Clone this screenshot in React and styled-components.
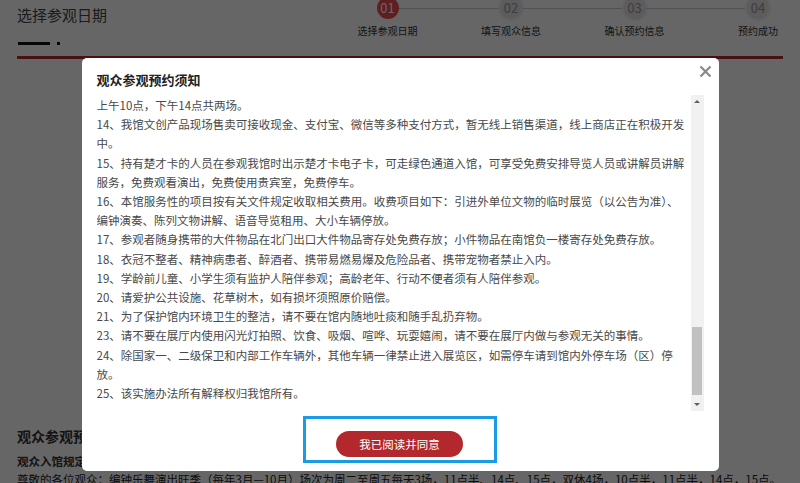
import React, { useEffect, useRef, useState } from "react";
import styled, { createGlobalStyle } from "styled-components";

const steps = [
  { no: "01", label: "选择参观日期" },
  { no: "02", label: "填写观众信息" },
  { no: "03", label: "确认预约信息" },
  { no: "04", label: "预约成功" },
];

const notices = [
  "为进一步做好观众服务工作，保障观众参观安全，维护良好的参观秩序，根据国家有关法律法规及上级主管部门的相关规定，结合我馆实际情况，特制定本实施办法。请广大观众在预约和参观前仔细阅读以下须知，并自觉遵守。",
  "一、开放时间",
  "本馆开放时间为每周二至周日9:00—17:00，16:00停止入馆，15:30停止发放当日门票。每周一（国家法定节假日除外）为闭馆日，闭馆期间进行设施维护和展陈调整。如遇特殊情况需临时闭馆或调整开放时间，将提前在官方网站、微信公众号等平台发布公告，敬请留意。",
  "二、预约方式",
  "本馆实行实名制免费预约参观，观众可通过本馆官方网站、微信公众号、小程序等渠道提前7天进行预约，每日预约名额有限，约满即止。暂不提供电话预约服务，请观众合理安排参观时间。",
  "每位观众凭本人有效身份证件每天限预约一次，每次预约最多可同时为4名同行观众登记，同行观众须如实填写姓名及有效证件号码。未成年人可由监护人代为预约。",
  "预约成功后，系统将以短信形式发送预约信息，观众须在预约日期的对应时段内凭本人有效证件原件入馆，逾期未到视为自动放弃，名额不予保留。",
  "如因故不能按时参观，请于参观日前一天17:00前通过预约渠道取消预约。一个自然月内累计三次预约后未到馆且未取消者，系统将自动暂停其预约资格30天。",
  "三、团队参观",
  "团队参观（10人及以上）须至少提前3天通过团队预约通道进行申请，由领队统一提交团队成员信息，参观当日由领队统一办理入馆手续，团队成员须集体入馆。",
  "学校组织的学生团体参观，须由带队教师提前联系本馆社会教育部，每10名学生须至少配备1名带队教师，带队教师负责学生在馆期间的安全与秩序。",
  "旅行社组织的团队须由持证导游带领，导游须佩戴导游证，并遵守本馆关于讲解区域、讲解音量等方面的管理规定，不得影响其他观众正常参观。",
  "四、优待政策",
  "残疾人、现役军人、消防救援人员、离休干部及70周岁以上老年人，凭本人有效证件可走绿色通道入馆，无需预约。",
  "孕妇、携带婴幼儿的观众可在服务台免费借用婴儿车，借用时须登记有效证件，参观结束后请及时归还至服务台。",
  "行动不便的观众可在服务台免费借用轮椅，馆内各展厅均设有无障碍通道及无障碍卫生间，如需帮助请与现场工作人员联系。",
  "五、服务设施",
  "本馆在一楼大厅设有服务台，提供咨询、寄存、失物招领、轮椅及婴儿车借用等服务；观众在参观过程中如遇任何问题，均可向服务台或展厅工作人员求助。",
  "馆内设有医务室，配备常用药品和急救设备，观众如有身体不适，请及时联系工作人员；馆内各楼层均设有饮水点和休息区，方便观众休憩。",
  "本馆设有观众餐厅和文创商店，营业时间与开馆时间一致，请观众在指定区域内用餐，勿将食品和饮料带入展厅。",
  "六、参观须知",
  "1、观众入馆须配合工作人员进行安全检查和证件查验，服从工作人员的引导和管理。严禁携带枪支弹药、管制刀具、易燃易爆、有毒有害、放射性、腐蚀性等危险物品入馆。",
  "2、请观众文明参观，爱护文物展品和展览设施，不得触摸、倚靠、攀爬展柜及展品，不得在展品、展板、墙面上刻画涂写。",
  "3、展厅内请保持安静，勿大声喧哗、追逐打闹，请将手机调至静音或振动状态，接听电话请轻声细语，以免影响其他观众参观。",
  "4、展厅内除特别标注禁止拍照的展品外，观众可进行非商业性拍照，但不得使用闪光灯、三脚架、自拍杆等辅助设备。未经许可，不得进行商业性摄影、摄像。",
  "5、请观众按照参观路线有序参观，遇人流高峰时请听从工作人员的疏导，不要拥挤，注意自身及他人安全。",
  "6、馆内严禁吸烟，严禁在馆内进行任何形式的商业宣传、推销、募捐及散发各类宣传品等活动。",
  "7、未经许可，任何单位和个人不得在馆内进行集会、演讲、表演、拍摄婚纱照及其他与参观无关的活动。",
  "8、请观众妥善保管好随身携带的贵重物品，如有遗失，本馆不承担责任；拾到他人物品请交至服务台。",
  "9、遇突发事件时，请保持冷静，听从工作人员指挥，按照应急疏散指示标志有序撤离，切勿惊慌拥挤。",
  "10、展厅内除特别标注外，观众不得使用无人机、激光笔等设备，不得对展品及其他观众造成干扰。",
  "11、馆内提供免费人工讲解服务，每天定时开展，具体场次以当日服务台公告为准；语音导览器可在服务台凭有效证件租用。",
  "12、编钟乐舞演出观众须提前在演出厅入口处排队，按先后顺序凭当日入馆凭证入场，每场限额观看，满员即止，演出开始后谢绝入场。",
  "13、编钟乐舞演出淡季（每年11月—次年2月）场次为周二至周五每天2场，双休日及节假日每天3场，具体安排详见当日公告。淡季工作日演出时间为\n上午10点，下午14点共两场。",
  "14、我馆文创产品现场售卖可接收现金、支付宝、微信等多种支付方式，暂无线上销售渠道，线上商店正在积极开发\n中。",
  "15、持有楚才卡的人员在参观我馆时出示楚才卡电子卡，可走绿色通道入馆，可享受免费安排导览人员或讲解员讲解\n服务，免费观看演出，免费使用贵宾室，免费停车。",
  "16、本馆服务性的项目按有关文件规定收取相关费用。收费项目如下：引进外单位文物的临时展览（以公告为准）、\n编钟演奏、陈列文物讲解、语音导览租用、大小车辆停放。",
  "17、参观者随身携带的大件物品在北门出口大件物品寄存处免费存放；小件物品在南馆负一楼寄存处免费存放。",
  "18、衣冠不整者、精神病患者、醉酒者、携带易燃易爆及危险品者、携带宠物者禁止入内。",
  "19、学龄前儿童、小学生须有监护人陪伴参观；高龄老年、行动不便者须有人陪伴参观。",
  "20、请爱护公共设施、花草树木，如有损坏须照原价赔偿。",
  "21、为了保护馆内环境卫生的整洁，请不要在馆内随地吐痰和随手乱扔弃物。",
  "23、请不要在展厅内使用闪光灯拍照、饮食、吸烟、喧哗、玩耍嬉闹，请不要在展厅内做与参观无关的事情。",
  "24、除国家一、二级保卫和内部工作车辆外，其他车辆一律禁止进入展览区，如需停车请到馆内外停车场（区）停\n放。",
  "25、该实施办法所有解释权归我馆所有。",
];

const TRACK = 290;

const App = () => {
  const scrollRef = useRef(null);
  const [thumb, setThumb] = useState({ top: 0, height: 40 });

  useEffect(() => {
    const el = scrollRef.current;
    if (!el) return;
    const update = () => {
      const height = Math.max(24, (TRACK * el.clientHeight) / el.scrollHeight);
      const range = el.scrollHeight - el.clientHeight;
      const top = range > 0 ? ((TRACK - 3 - height) * el.scrollTop) / range : 0;
      setThumb({ top, height });
    };
    el.scrollTop = el.scrollHeight;
    update();
    el.addEventListener("scroll", update);
    return () => el.removeEventListener("scroll", update);
  }, []);

  return (
    <>
      <GlobalStyle />
      <Page>
        <Header>
          <TitleBlock>
            <PageTitle>选择参观日期</PageTitle>
            <TitleMark>
              <MarkBar />
              <MarkDot />
            </TitleMark>
          </TitleBlock>
          <Steps>
            {steps.map((step, i) => (
              <React.Fragment key={step.no}>
                {i > 0 && <Connector />}
                <Step>
                  <StepCircle $active={i === 0}>{step.no}</StepCircle>
                  <StepLabel>{step.label}</StepLabel>
                </Step>
              </React.Fragment>
            ))}
          </Steps>
        </Header>
        <RedRule />
        <DateArea />
        <SectionHeading>观众参观预约须知</SectionHeading>
        <RuleTitle>观众入馆规定：</RuleTitle>
        <NoticeLine>
          尊敬的各位观众：编钟乐舞演出旺季（每年3月—10月）场次为周二至周五每天3场，11点半、14点、15点，双休4场，10点半，11点半，14点，15点。
        </NoticeLine>
      </Page>

      <Overlay>
        <Modal>
          <ModalHeader>
            <ModalTitle>观众参观预约须知</ModalTitle>
            <CloseButton aria-label="关闭">
              <svg width="13" height="13" viewBox="0 0 13 13">
                <path
                  d="M1.5 1.5 L11.5 11.5 M11.5 1.5 L1.5 11.5"
                  stroke="#8a8a8a"
                  strokeWidth="2.3"
                />
              </svg>
            </CloseButton>
          </ModalHeader>
          <ScrollFrame>
            <ScrollBody ref={scrollRef}>
              {notices.map((text, i) => (
                <Paragraph key={i}>{text}</Paragraph>
              ))}
            </ScrollBody>
            <ScrollBar>
              <ArrowButton>
                <Arrow />
              </ArrowButton>
              <Track>
                <Thumb style={{ marginTop: thumb.top, height: thumb.height }} />
              </Track>
              <ArrowButton>
                <Arrow $down />
              </ArrowButton>
            </ScrollBar>
          </ScrollFrame>
          <Footer>
            <HighlightBox>
              <AgreeButton>我已阅读并同意</AgreeButton>
            </HighlightBox>
          </Footer>
        </Modal>
      </Overlay>
    </>
  );
};

const GlobalStyle = createGlobalStyle`
  body {
    margin: 0;
    background: #fff;
    font-family: "Noto Sans CJK SC", "Noto Sans", sans-serif;
    color: #333;
  }
`;

const Page = styled.div`
  padding: 0 17px;
`;

const Header = styled.div`
  display: flex;
  justify-content: space-between;
  height: 56px;
`;

const TitleBlock = styled.div`
  padding-top: 5px;
`;

const PageTitle = styled.div`
  font-size: 15px;
  line-height: 20px;
  color: #444;
`;

const TitleMark = styled.div`
  display: flex;
  align-items: center;
  gap: 7px;
  margin-top: 17px;
  padding-left: 1px;
`;

const MarkBar = styled.span`
  width: 32px;
  height: 3px;
  background: #111;
`;

const MarkDot = styled.span`
  width: 3px;
  height: 3px;
  background: #111;
`;

const Steps = styled.div`
  display: flex;
  align-items: flex-start;
  margin-top: -3px;
  margin-right: 14px;
`;

const Step = styled.div`
  width: 22px;
  display: flex;
  flex-direction: column;
  align-items: center;
`;

const StepCircle = styled.div`
  width: 22px;
  height: 22px;
  border-radius: 50%;
  background: ${(props) => (props.$active ? "#f04c50" : "#e6e6e6")};
  color: ${(props) => (props.$active ? "#fff" : "#9a9a9a")};
  box-shadow: ${(props) => (props.$active ? "none" : "0 0 0 2px #f3f3f3")};
  font-size: 13px;
  line-height: 22px;
  text-align: center;
`;

const StepLabel = styled.div`
  margin-top: 6px;
  font-size: 10px;
  line-height: 12px;
  white-space: nowrap;
  color: #333;
`;

const Connector = styled.div`
  width: 101.5px;
  height: 1px;
  margin-top: 10.5px;
  background: #ccc;
`;

const RedRule = styled.div`
  height: 3px;
  background: #b82c31;
`;

const DateArea = styled.div`
  height: 367px;
`;

const SectionHeading = styled.div`
  font-size: 14px;
  line-height: 20px;
  font-weight: bold;
  color: #333;
`;

const RuleTitle = styled.div`
  margin-top: 6px;
  font-size: 11.5px;
  line-height: 18px;
  font-weight: bold;
  color: #333;
`;

const NoticeLine = styled.div`
  font-size: 11.5px;
  line-height: 18px;
  color: #222;
  white-space: nowrap;
`;

const Overlay = styled.div`
  position: fixed;
  inset: 0;
  background: rgba(0, 0, 0, 0.6);
  display: flex;
  justify-content: center;
  align-items: flex-start;
  padding-top: 58px;
`;

const Modal = styled.div`
  width: 637px;
  height: 413px;
  box-sizing: border-box;
  padding: 13px 15px 0;
  background: #fff;
  border-radius: 5px;
  display: flex;
  flex-direction: column;
`;

const ModalHeader = styled.div`
  display: flex;
  justify-content: space-between;
  align-items: flex-start;
`;

const ModalTitle = styled.div`
  font-size: 13px;
  line-height: 18px;
  font-weight: bold;
  color: #222;
`;

const CloseButton = styled.button`
  display: flex;
  padding: 0;
  border: none;
  background: none;
  margin: -6px -8px 0 0;
  cursor: pointer;
`;

const ScrollFrame = styled.div`
  display: flex;
  height: 316px;
  margin-top: 6px;
`;

const ScrollBody = styled.div`
  flex: 1;
  min-width: 0;
  box-sizing: border-box;
  padding-bottom: 8px;
  overflow-y: auto;
  overflow-x: hidden;
  scrollbar-width: none;
`;

const ScrollBar = styled.div`
  width: 13px;
  display: flex;
  flex-direction: column;
  background: #f1f1f1;
`;

const ArrowButton = styled.div`
  height: 13px;
  display: flex;
  align-items: center;
  justify-content: center;
`;

const Arrow = styled.span`
  width: 0;
  height: 0;
  border-left: 3px solid transparent;
  border-right: 3px solid transparent;
  border-bottom: ${(props) => (props.$down ? "none" : "3px solid #606060")};
  border-top: ${(props) => (props.$down ? "3px solid #606060" : "none")};
`;

const Track = styled.div`
  flex: 1;
  padding: 0 1.5px;
`;

const Thumb = styled.div`
  background: #c1c1c1;
`;

const Paragraph = styled.p`
  margin: 0;
  font-size: 11.5px;
  line-height: 19.2px;
  color: #484848;
  white-space: pre-line;
`;

const Footer = styled.div`
  display: flex;
  justify-content: center;
  margin-top: 5px;
`;

const HighlightBox = styled.div`
  border: 3px solid #1b9be3;
  padding: 12px 31px 3px 30px;
`;

const AgreeButton = styled.button`
  display: block;
  width: 127px;
  height: 26px;
  border: none;
  border-radius: 13px;
  background: #b2282c;
  color: #fff;
  font-family: inherit;
  font-size: 11.5px;
  cursor: pointer;
`;

export default App;
